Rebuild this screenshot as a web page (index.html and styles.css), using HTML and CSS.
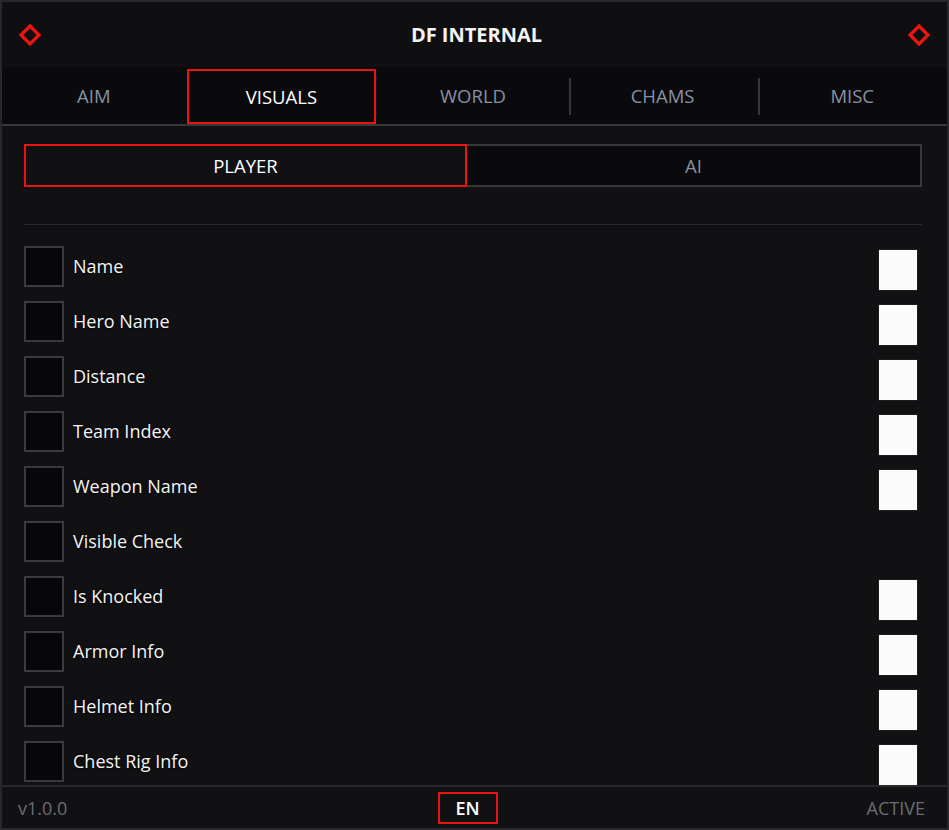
FILE: index.html
```html
<!DOCTYPE html>
<html lang="en">
<head>
    <meta charset="UTF-8">
    <meta name="viewport" content="width=device-width, initial-scale=1.0">
    <title>DF INTERNAL</title>
    <link rel="stylesheet" href="styles.css">
</head>
<body>
    <div class="window">
        <header class="header">
            <svg class="diamond" width="24" height="24" viewBox="0 0 24 24"><path d="M12 3 L21 12 L12 21 L3 12 Z" fill="none" stroke="#f0140f" stroke-width="3.2"/></svg>
            <h1 class="title">DF INTERNAL</h1>
            <svg class="diamond" width="24" height="24" viewBox="0 0 24 24"><path d="M12 3 L21 12 L12 21 L3 12 Z" fill="none" stroke="#f0140f" stroke-width="3.2"/></svg>
        </header>

        <nav class="tabs">
            <div class="tab">AIM</div>
            <div class="tab active">VISUALS</div>
            <div class="tab">WORLD</div>
            <div class="tab sep">CHAMS</div>
            <div class="tab sep">MISC</div>
        </nav>

        <main class="content">
            <div class="subtabs">
                <div class="subtab active">PLAYER</div>
                <div class="subtab">AI</div>
            </div>

            <div class="divider"></div>

            <div class="list">
                <div class="row"><span class="check"></span><span class="label">Name</span><span class="swatch"></span></div>
                <div class="row"><span class="check"></span><span class="label">Hero Name</span><span class="swatch"></span></div>
                <div class="row"><span class="check"></span><span class="label">Distance</span><span class="swatch"></span></div>
                <div class="row"><span class="check"></span><span class="label">Team Index</span><span class="swatch"></span></div>
                <div class="row"><span class="check"></span><span class="label">Weapon Name</span><span class="swatch"></span></div>
                <div class="row"><span class="check"></span><span class="label">Visible Check</span></div>
                <div class="row"><span class="check"></span><span class="label">Is Knocked</span><span class="swatch"></span></div>
                <div class="row"><span class="check"></span><span class="label">Armor Info</span><span class="swatch"></span></div>
                <div class="row"><span class="check"></span><span class="label">Helmet Info</span><span class="swatch"></span></div>
                <div class="row"><span class="check"></span><span class="label">Chest Rig Info</span><span class="swatch"></span></div>
            </div>
        </main>

        <footer class="footer">
            <span class="version">v1.0.0</span>
            <span class="lang">EN</span>
            <span class="status">ACTIVE</span>
        </footer>
    </div>
</body>
</html>
```

FILE: styles.css
```css
:root {
    --red: #ec140f;
    --bg: #111114;
    --header-bg: #0f0f12;
    --tabs-bg: #0a0a0c;
    --line: #38383b;
    --muted: #8891a3;
    --footer-text: #6a6d72;
    --text: #f4f4f4;
}

* {
    box-sizing: border-box;
}

body {
    margin: 0;
    background-color: var(--bg);
    font-family: "Open Sans", "Noto Sans", sans-serif;
    color: var(--text);
}

.window {
    width: 949px;
    height: 830px;
    display: flex;
    flex-direction: column;
    border: 2px solid #28282b;
    background-color: var(--bg);
    overflow: hidden;
}

.header {
    height: 65px;
    flex: none;
    display: flex;
    align-items: center;
    justify-content: space-between;
    padding: 0 16px 0 16px;
    background-color: var(--header-bg);
}

.diamond {
    display: block;
}

.title {
    margin: 0 0 0 4px;
    font-size: 20px;
    font-weight: 700;
}

.tabs {
    height: 59px;
    flex: none;
    display: grid;
    grid-template-columns: repeat(5, 1fr);
    margin-left: -3px;
    background-color: var(--tabs-bg);
    border-bottom: 2px solid var(--line);
}

.tab {
    position: relative;
    display: flex;
    align-items: center;
    justify-content: center;
    font-size: 18.5px;
    color: var(--muted);
}

.tab.active {
    color: #fff;
    border: 2px solid var(--red);
    margin: 2px 2px 0 -2px;
}

.tab.sep::before {
    content: "";
    position: absolute;
    left: 1px;
    top: 11px;
    bottom: 9px;
    width: 2px;
    background-color: var(--line);
}

.content {
    flex: 1;
    min-height: 0;
    display: flex;
    flex-direction: column;
    padding: 18px 25px 0 22px;
    overflow: hidden;
}

.subtabs {
    flex: none;
    display: grid;
    grid-template-columns: 443px 1fr;
    height: 43px;
}

.subtab {
    display: flex;
    align-items: center;
    justify-content: center;
    font-size: 18.5px;
    color: var(--muted);
    background-color: var(--tabs-bg);
    border: 2px solid var(--line);
    border-left: none;
}

.subtab.active {
    color: #fff;
    background-color: var(--bg);
    border: 2px solid var(--red);
}

.divider {
    flex: none;
    height: 1px;
    margin-top: 37px;
    background-color: #2a2a2d;
}

.list {
    flex: none;
    display: flex;
    flex-direction: column;
    gap: 14px;
    padding-top: 21px;
}

.row {
    display: flex;
    align-items: flex-start;
    height: 41px;
}

.check {
    width: 40px;
    height: 41px;
    flex: none;
    border: 2px solid #3b3b3e;
    background-color: #070709;
}

.label {
    flex: 1;
    line-height: 41px;
    margin-left: 9px;
    font-size: 18px;
    font-weight: 500;
    text-shadow: 0 0 3px #000;
}

.swatch {
    width: 40px;
    height: 42px;
    flex: none;
    margin: 3px 4px 0 0;
    background-color: #fbfbfb;
    border: 1px solid #1e1e1e;
}

.footer {
    height: 43px;
    flex: none;
    display: grid;
    grid-template-columns: 1fr auto 1fr;
    align-items: center;
    padding: 0 22px 0 16px;
    border-top: 2px solid #2a2a2d;
    background-color: var(--bg);
    font-size: 18px;
    color: var(--footer-text);
}

.lang {
    width: 60px;
    height: 32px;
    display: flex;
    align-items: center;
    justify-content: center;
    margin-left: -8px;
    border: 2px solid var(--red);
    color: #fff;
    font-weight: 600;
}

.status {
    justify-self: end;
    font-weight: 500;
}
```
